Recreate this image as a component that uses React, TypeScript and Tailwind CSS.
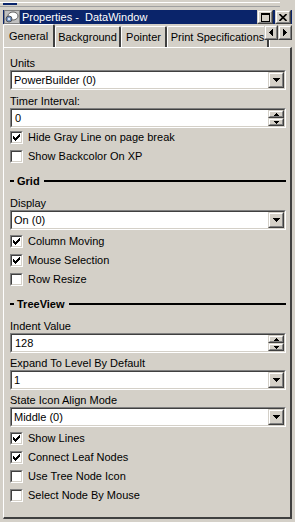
import React from "react";

const sunkenOuter =
  "border border-t-[#808080] border-l-[#808080] border-b-white border-r-white";
const sunkenInner =
  "border border-t-[#404040] border-l-[#404040] border-b-[#d4d0c8] border-r-[#d4d0c8]";
const raisedOuter =
  "border border-t-[#d4d0c8] border-l-[#d4d0c8] border-b-[#404040] border-r-[#404040]";
const raisedInner =
  "border border-t-white border-l-white border-b-[#808080] border-r-[#808080]";

function Raised({
  className,
  children,
}: {
  className?: string;
  children?: React.ReactNode;
}) {
  return (
    <div className={`bg-[#d4d0c8] ${raisedOuter} ${className || ""}`}>
      <div className={`w-full h-full flex items-center justify-center ${raisedInner}`}>
        {children}
      </div>
    </div>
  );
}

const DownArrow = ({ w = 7, h = 4 }: { w?: number; h?: number }) => (
  <svg width={w} height={h} viewBox={`0 0 ${w} ${h}`} shapeRendering="crispEdges">
    <polygon points={`0,0 ${w},0 ${w / 2},${h}`} fill="#000" />
  </svg>
);

const UpArrow = ({ w = 5, h = 3 }: { w?: number; h?: number }) => (
  <svg width={w} height={h} viewBox={`0 0 ${w} ${h}`} shapeRendering="crispEdges">
    <polygon points={`${w / 2},0 ${w},${h} 0,${h}`} fill="#000" />
  </svg>
);

function Label({ text, className }: { text: string; className?: string }) {
  return <div className={`h-[14px] leading-[14px] ${className || ""}`}>{text}</div>;
}

function Dropdown({ value }: { value: string }) {
  return (
    <div className={`h-[20px] ${sunkenOuter}`}>
      <div className={`h-full flex bg-white ${sunkenInner}`}>
        <div className="flex-1 pl-[2px] leading-[16px]">{value}</div>
        <Raised className="w-[16px] h-[16px]">
          <DownArrow />
        </Raised>
      </div>
    </div>
  );
}

function Spin({ value }: { value: string }) {
  return (
    <div className={`h-[20px] ${sunkenOuter}`}>
      <div className={`h-full flex bg-white ${sunkenInner}`}>
        <div className="flex-1 pl-[3px] leading-[16px]">{value}</div>
        <div className="flex flex-col w-[16px]">
          <Raised className="h-[8px]">
            <UpArrow />
          </Raised>
          <Raised className="h-[8px]">
            <DownArrow w={5} h={3} />
          </Raised>
        </div>
      </div>
    </div>
  );
}

function Check({ text, checked }: { text: string; checked?: boolean }) {
  return (
    <div className="h-[19px] flex items-center">
      <div className={`w-[13px] h-[13px] ${sunkenOuter}`}>
        <div className={`w-full h-full bg-white flex items-center justify-center ${sunkenInner}`}>
          {checked && (
            <svg width="7" height="7" viewBox="0 0 7 7" shapeRendering="crispEdges">
              <polygon points="0,2 2,4 7,-1 7,2 2,7 0,5" fill="#000" />
            </svg>
          )}
        </div>
      </div>
      <span className="ml-[5px] leading-[13px]">{text}</span>
    </div>
  );
}

function Section({ title }: { title: string }) {
  return (
    <div className="h-[30px] flex items-center">
      <div className="w-[4px] h-[2px] bg-black" />
      <span className="ml-[3px] font-bold leading-[13px]">{title}</span>
      <div className="flex-1 h-[2px] bg-black ml-[4px] -mt-[1px]" />
    </div>
  );
}

function Tab({ label, w }: { label: string; w: string }) {
  return (
    <div
      className={`${w} shrink-0 h-[21px] bg-[#d4d0c8] border-t border-l border-t-white border-l-white border-r-2 border-r-[#404040] rounded-tl-[2px] rounded-tr-[2px] flex items-center justify-center whitespace-nowrap leading-[13px] pt-[1px]`}
    >
      {label}
    </div>
  );
}

export default function App() {
  return (
    <div className="w-[295px] h-[522px] bg-[#d4d0c8] flex flex-col pl-[3px] pr-[3px] pb-[3px] text-[11px] text-black font-[family-name:'Liberation_Sans',Arial,sans-serif] overflow-hidden select-none">
      {/* top strip */}
      <div className="h-[10px] -ml-[3px] pr-[12px] pt-[2px]">
        <div className="h-[1px] bg-white" />
        <div className="ml-[3px] w-[14px] h-[2px] bg-[#0a246a]" />
        <div className="mt-[1px] h-[1px] bg-[#a0a0a0]" />
      </div>

      {/* title bar */}
      <div className="h-[14px] bg-[#0a246a] flex items-center">
        <svg width="16" height="14" viewBox="0 0 16 14" className="ml-[1px]">
          <rect x="0.5" y="0.5" width="15" height="13" fill="#c0c0c0" stroke="#808080" />
          <ellipse cx="9" cy="6" rx="5" ry="4" fill="#fff" stroke="#404040" strokeWidth="0.8" />
          <circle cx="5" cy="9" r="3" fill="#6f8fc0" stroke="#404040" strokeWidth="0.8" />
          <circle cx="5" cy="9" r="1.2" fill="#dbe6f5" />
        </svg>
        <span className="ml-[2px] text-white leading-[13px] whitespace-pre">Properties -  DataWindow</span>
        <div className="flex-1" />
        <Raised className="w-[16px] h-[14px]">
          <svg width="9" height="9" viewBox="0 0 9 9" shapeRendering="crispEdges">
            <rect x="0.5" y="1" width="8" height="7.5" fill="none" stroke="#000" />
            <rect x="0" y="0" width="9" height="2" fill="#000" />
          </svg>
        </Raised>
        <Raised className="w-[16px] h-[14px] ml-[2px] mr-[1px]">
          <svg width="8" height="7" viewBox="0 0 8 7">
            <path d="M0.5 0 L7.5 7 M7.5 0 L0.5 7" stroke="#000" strokeWidth="1.6" />
          </svg>
        </Raised>
      </div>

      {/* tabs */}
      <div className="relative h-[23px] flex items-end overflow-hidden">
        <div className="relative z-10 w-[52px] shrink-0 h-[24px] -mb-[1px] bg-[#d4d0c8] border-t border-l border-t-white border-l-white border-r-2 border-r-[#404040] rounded-tl-[2px] rounded-tr-[2px] pl-[5px] pt-[5px] leading-[13px]">
          General
        </div>
        <Tab label="Background" w="w-[66px]" />
        <Tab label="Pointer" w="w-[46px]" />
        <Tab label="Print Specifications" w="w-[102px]" />
        <Tab label="" w="w-[70px]" />
        <div className="absolute right-0 top-[1px] flex">
          <Raised className="w-[14px] h-[15px]">
            <svg width="4" height="7" viewBox="0 0 4 7" shapeRendering="crispEdges">
              <polygon points="4,0 4,7 0,3.5" fill="#000" />
            </svg>
          </Raised>
          <Raised className="w-[14px] h-[15px]">
            <svg width="4" height="7" viewBox="0 0 4 7" shapeRendering="crispEdges">
              <polygon points="0,0 4,3.5 0,7" fill="#000" />
            </svg>
          </Raised>
        </div>
      </div>

      {/* panel */}
      <div className="flex-1 border-t border-l border-t-white border-l-white border-r-2 border-b-2 border-r-[#404040] border-b-[#404040] pt-[8px] pl-[6px] pr-[4px]">
        <Label text="Units" />
        <Dropdown value="PowerBuilder (0)" />
        <Label text="Timer Interval:" className="mt-[4px]" />
        <Spin value="0" />
        <Check text="Hide Gray Line on page break" checked />
        <Check text="Show Backcolor On XP" />

        <Section title="Grid" />
        <Label text="Display" />
        <Dropdown value="On (0)" />
        <div className="mt-[2px]">
          <Check text="Column Moving" checked />
          <Check text="Mouse Selection" checked />
          <Check text="Row Resize" />
        </div>

        <Section title="TreeView" />
        <Label text="Indent Value" />
        <Spin value="128" />
        <Label text="Expand To Level By Default" className="mt-[3px]" />
        <Dropdown value="1" />
        <Label text="State Icon Align Mode" className="mt-[3px]" />
        <Dropdown value="Middle (0)" />
        <div className="mt-[2px]">
          <Check text="Show Lines" checked />
          <Check text="Connect Leaf Nodes" checked />
          <Check text="Use Tree Node Icon" />
          <Check text="Select Node By Mouse" />
        </div>
      </div>
    </div>
  );
}
